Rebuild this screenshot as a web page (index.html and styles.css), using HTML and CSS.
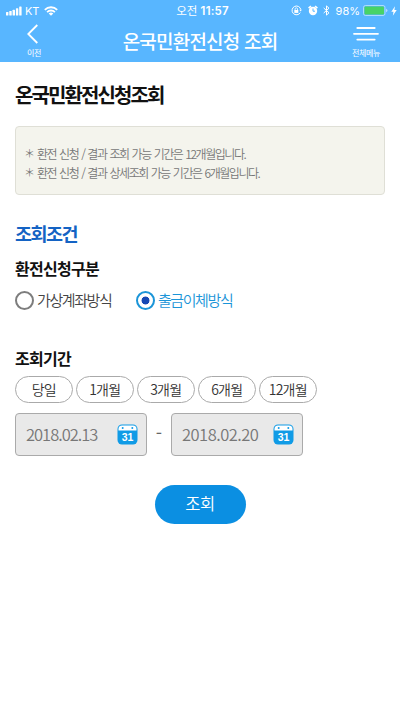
FILE: index.html
```
<!DOCTYPE html>
<html lang="ko">
<head>
	<meta charset="utf-8">
	<title>온국민환전신청 조회</title>
	<link rel="stylesheet" href="styles.css">
</head>
<body>
<header class="header">
	<div class="statusBar">
		<div class="carrier">
			<svg class="signal" width="16" height="10" viewBox="0 0 16 10" fill="#fff">
				<rect x="0" y="6" width="2.4" height="3.5" rx=".6"/>
				<rect x="3.3" y="5" width="2.4" height="4.5" rx=".6"/>
				<rect x="6.6" y="3.7" width="2.4" height="5.8" rx=".6"/>
				<rect x="9.9" y="2.2" width="2.4" height="7.3" rx=".6"/>
				<rect x="13.2" y=".5" width="2.4" height="9" rx=".6"/>
			</svg>
			<span class="carrierName">KT</span>
			<svg width="14" height="10" viewBox="0 0 14 10" fill="none" stroke="#fff" stroke-width="1.8">
				<path d="M.8 3.8a8.8 8.8 0 0 1 12.4 0"/>
				<path d="M3.1 6.1a5.5 5.5 0 0 1 7.8 0"/>
				<path d="M7 9.8 4.7 7.5a3.3 3.3 0 0 1 4.6 0z" fill="#fff" stroke="none"/>
			</svg>
		</div>
		<div class="time">오전 <b>11:57</b></div>
		<div class="indicators">
			<svg width="11" height="11" viewBox="0 0 11 11" fill="none" stroke="#fff">
				<path d="M9.3 7.6A4.4 4.4 0 1 1 9.8 4.6"/>
				<path d="M8.3 4.7h2.5L9.7 6.5z" fill="#fff" stroke="none"/>
				<rect x="3.3" y="5" width="4" height="2.9" fill="#fff" stroke="none"/>
				<path d="M4.1 5V4a1.2 1.2 0 0 1 2.4 0v1" stroke-width=".8"/>
			</svg>
			<svg class="alarm" width="10" height="11" viewBox="0 0 10 11">
				<circle cx="5" cy="6" r="4.2" fill="#fff"/>
				<path d="M.6 3.2 3 1.1M7 1.1l2.4 2.1" stroke="#fff" stroke-width="1.6"/>
				<path d="M5 3.5V6.2h2" fill="none" stroke="#58b6ff"/>
			</svg>
			<svg class="bluetooth" width="7" height="11" viewBox="0 0 7 11" fill="none" stroke="#fff">
				<path d="M.7 3 6 7.8 3.5 10.1V.9L6 3.2.7 8"/>
			</svg>
			<span class="percent">98%</span>
			<svg width="25" height="11" viewBox="0 0 25 11">
				<rect x=".5" y=".5" width="21.5" height="10" rx="2" fill="none" stroke="#c4e5ff" stroke-width=".8"/>
				<rect x="1.5" y="1.5" width="19.5" height="8" rx="1" fill="#48d366"/>
				<path d="M23.2 3.8v3.4q1.2-.4 1.2-1.7t-1.2-1.7z" fill="#c4e5ff"/>
			</svg>
			<svg class="bolt" width="6" height="10" viewBox="0 0 6 10" fill="#fff">
				<path d="M4 .3.3 5.7h2.2L1.8 9.7 5.7 4H3.4z"/>
			</svg>
		</div>
	</div>
	<div class="navBar">
		<a class="navItem back">
			<svg width="14" height="20" viewBox="0 0 14 20" fill="none" stroke="#fff" stroke-width="1.8">
				<path d="M10.3 1 1.3 10l9 9"/>
			</svg>
			<span>이전</span>
		</a>
		<h1 class="title">온국민환전신청 조회</h1>
		<a class="navItem menu">
			<svg width="26" height="20" viewBox="0 0 26 20" stroke="#fff" stroke-width="1.8" stroke-linecap="round">
				<path d="M4.3 4h17.4M1 9.8h24M4.3 15.6h17.4"/>
			</svg>
			<span>전체메뉴</span>
		</a>
	</div>
</header>

<main class="content">
	<h2 class="pageTitle">온국민환전신청조회</h2>
	<ul class="notice">
		<li><span class="mark">＊</span><span class="noticeText">환전 신청 / 결과 조회 가능 기간은 12개월입니다.</span></li>
		<li><span class="mark">＊</span><span class="noticeText">환전 신청 / 결과 상세조회 가능 기간은 6개월입니다.</span></li>
	</ul>

	<h3 class="sectionTitle">조회조건</h3>

	<h4 class="label">환전신청구분</h4>
	<div class="radios">
		<label class="radio"><span class="circle"></span><span class="radioText">가상계좌방식</span></label>
		<label class="radio checked"><span class="circle"></span><span class="radioText">출금이체방식</span></label>
	</div>

	<h4 class="label">조회기간</h4>
	<div class="periods">
		<button class="period">당일</button>
		<button class="period">1개월</button>
		<button class="period">3개월</button>
		<button class="period">6개월</button>
		<button class="period">12개월</button>
	</div>
	<div class="dates">
		<div class="date from">
			<span class="dateText">2018.02.13</span>
			<svg width="21" height="21" viewBox="0 0 21 21">
				<rect x=".5" y=".5" width="20" height="20" rx="4.5" fill="#109be6"/>
				<path d="M1.5 6.4V5q0-3.5 3.5-3.5h11q3.5 0 3.5 3.5v1.4z" fill="#fff"/>
				<circle cx="5.7" cy="4" r="1" fill="#109be6"/>
				<circle cx="15.3" cy="4" r="1" fill="#109be6"/>
				<text class="calendarDay" x="10.5" y="16.5" text-anchor="middle">31</text>
			</svg>
		</div>
		<span class="dash">-</span>
		<div class="date to">
			<span class="dateText">2018.02.20</span>
			<svg width="21" height="21" viewBox="0 0 21 21">
				<rect x=".5" y=".5" width="20" height="20" rx="4.5" fill="#109be6"/>
				<path d="M1.5 6.4V5q0-3.5 3.5-3.5h11q3.5 0 3.5 3.5v1.4z" fill="#fff"/>
				<circle cx="5.7" cy="4" r="1" fill="#109be6"/>
				<circle cx="15.3" cy="4" r="1" fill="#109be6"/>
				<text class="calendarDay" x="10.5" y="16.5" text-anchor="middle">31</text>
			</svg>
		</div>
	</div>

	<button class="submit">조회</button>
</main>
</body>
</html>
```
FILE: styles.css
```
* {
	box-sizing: border-box;
}

body {
	margin: 0;
	background-color: #fff;
	font-family: "Noto Sans CJK KR", sans-serif;
	color: #333;
}

h1, h2, h3, h4, ul {
	margin: 0;
	padding: 0;
}

button {
	padding: 0;
	font-family: inherit;
}

svg {
	display: block;
	flex: none;
}

/* header */
.header {
	height: 62px;
	background-color: #58b6ff;
	color: #fff;
}

.statusBar {
	display: grid;
	grid-template-columns: 1fr auto 1fr;
	align-items: center;
	height: 20px;
	padding: 0 3px 0 6px;
	font-size: 11px;
	line-height: 20px;
}

.carrier, .indicators {
	display: flex;
	align-items: center;
}

.carrierName {
	margin: 0 5px 0 3px;
	font-family: Inter, sans-serif;
	font-size: 11px;
	letter-spacing: -0.2px;
}

.time {
	padding-left: 2px;
	font-size: 11.5px;
	white-space: nowrap;
}

.time b {
	font-family: Inter, sans-serif;
	font-weight: 600;
	letter-spacing: 0.2px;
}

.indicators {
	justify-content: flex-end;
}

.alarm {
	margin-left: 6px;
}

.bluetooth {
	margin-left: 5px;
}

.percent {
	margin: 0 3px 0 6px;
	font-family: Inter, sans-serif;
	font-size: 11px;
}

.bolt {
	margin-left: 3px;
}

.navBar {
	display: grid;
	grid-template-columns: 68px 1fr 68px;
	height: 42px;
}

.navItem {
	display: flex;
	flex-direction: column;
	align-items: center;
	padding-top: 4px;
	font-size: 8px;
	line-height: 11px;
	letter-spacing: -0.3px;
	white-space: nowrap;
}

.navItem span {
	margin-top: 3px;
}

.title {
	font-size: 19px;
	font-weight: 500;
	line-height: 41px;
	letter-spacing: -0.8px;
	text-align: center;
	white-space: nowrap;
}

/* content */
.content {
	display: flex;
	flex-direction: column;
	padding: 18px 15px 0;
}

.pageTitle {
	font-size: 20px;
	font-weight: 700;
	line-height: 30px;
	letter-spacing: -1.9px;
	color: #111;
}

.notice {
	height: 69px;
	margin-top: 16px;
	padding: 17px 9px 0;
	border: 1px solid #dfdfd6;
	border-radius: 4px;
	background-color: #f4f4ed;
	list-style: none;
	font-size: 12px;
	font-weight: 350;
	line-height: 19px;
	color: #777;
}

.notice li {
	display: flex;
	white-space: nowrap;
}

.mark {
	width: 13px;
	margin-left: -1px;
	font-size: 11px;
}

.noticeText {
	letter-spacing: -1.45px;
	word-spacing: 1px;
}

.sectionTitle {
	margin-top: 24px;
	font-size: 18.5px;
	font-weight: 700;
	line-height: 28px;
	letter-spacing: -1.5px;
	color: #1463c4;
}

.label {
	margin-top: 8px;
	font-size: 16px;
	font-weight: 700;
	line-height: 26px;
	letter-spacing: -0.7px;
	color: #111;
}

.radios {
	display: flex;
	gap: 24.5px;
	height: 20px;
	margin: 9px 0 27px;
}

.radio {
	display: flex;
	align-items: center;
	font-size: 15px;
	font-weight: 350;
	letter-spacing: -1.4px;
	color: #444;
}

.radioText {
	padding-bottom: 2px;
}

.circle {
	width: 19px;
	height: 19px;
	margin-right: 3px;
	border: 2px solid #7d7d7d;
	border-radius: 50%;
}

.checked {
	color: #1b95d8;
}

.checked .circle {
	border-color: #1b95d8;
	background: radial-gradient(circle, #1548b4 3.6px, #fff 4.3px);
}

.periods {
	display: flex;
	gap: 3.5px;
	margin-top: 5px;
}

.period {
	width: 57.5px;
	height: 27px;
	border: 1px solid #aaa;
	border-radius: 14px;
	background-color: #fff;
	font-size: 14px;
	font-weight: 350;
	letter-spacing: -0.8px;
	line-height: 22px;
	padding-bottom: 2px;
	color: #333;
}

.dates {
	display: flex;
	margin-top: 10px;
}

.date {
	display: flex;
	align-items: center;
	justify-content: space-between;
	width: 132px;
	height: 43px;
	padding: 0 8px 0 10px;
	border: 1px solid #aaa;
	border-radius: 4px;
	background-color: #e9e9e9;
	font-size: 16.5px;
	font-weight: 350;
	color: #777;
}

.dateText {
	padding-bottom: 1px;
}

.from {
	letter-spacing: -1px;
}

.to {
	letter-spacing: -0.5px;
}

.calendarDay {
	font-family: "Liberation Sans", sans-serif;
	font-size: 10.5px;
	font-weight: 700;
	letter-spacing: 0;
	fill: #fff;
}

.dash {
	width: 24px;
	font-size: 18px;
	line-height: 38px;
	text-align: center;
	color: #666;
}

.submit {
	align-self: center;
	width: 91px;
	height: 39px;
	margin-top: 29px;
	border: 0;
	border-radius: 20px;
	background-color: #0b8fe2;
	font-size: 16.5px;
	font-weight: 350;
	line-height: 35px;
	padding-bottom: 3px;
	letter-spacing: -0.5px;
	color: #fff;
}
```
